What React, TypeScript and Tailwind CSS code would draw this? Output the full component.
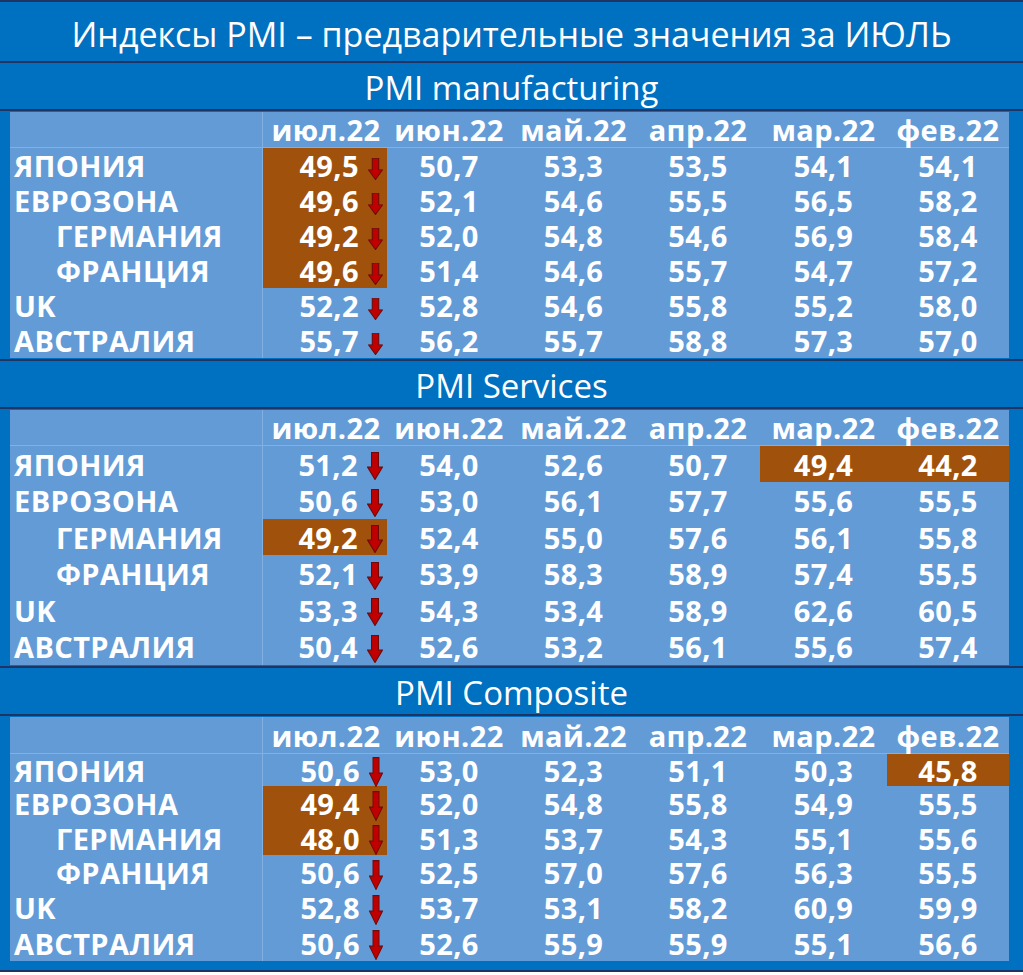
import React from 'react';

const months = ['июл.22', 'июн.22', 'май.22', 'апр.22', 'мар.22', 'фев.22'];

interface Row {
  label: string;
  indent?: boolean;
  values: string[];
  hl?: number[];
}

const manufacturing: Row[] = [
  { label: 'ЯПОНИЯ', values: ['49,5', '50,7', '53,3', '53,5', '54,1', '54,1'], hl: [0] },
  { label: 'ЕВРОЗОНА', values: ['49,6', '52,1', '54,6', '55,5', '56,5', '58,2'], hl: [0] },
  { label: 'ГЕРМАНИЯ', indent: true, values: ['49,2', '52,0', '54,8', '54,6', '56,9', '58,4'], hl: [0] },
  { label: 'ФРАНЦИЯ', indent: true, values: ['49,6', '51,4', '54,6', '55,7', '54,7', '57,2'], hl: [0] },
  { label: 'UK', values: ['52,2', '52,8', '54,6', '55,8', '55,2', '58,0'] },
  { label: 'АВСТРАЛИЯ', values: ['55,7', '56,2', '55,7', '58,8', '57,3', '57,0'] },
];

const services: Row[] = [
  { label: 'ЯПОНИЯ', values: ['51,2', '54,0', '52,6', '50,7', '49,4', '44,2'], hl: [4, 5] },
  { label: 'ЕВРОЗОНА', values: ['50,6', '53,0', '56,1', '57,7', '55,6', '55,5'] },
  { label: 'ГЕРМАНИЯ', indent: true, values: ['49,2', '52,4', '55,0', '57,6', '56,1', '55,8'], hl: [0] },
  { label: 'ФРАНЦИЯ', indent: true, values: ['52,1', '53,9', '58,3', '58,9', '57,4', '55,5'] },
  { label: 'UK', values: ['53,3', '54,3', '53,4', '58,9', '62,6', '60,5'] },
  { label: 'АВСТРАЛИЯ', values: ['50,4', '52,6', '53,2', '56,1', '55,6', '57,4'] },
];

const composite: Row[] = [
  { label: 'ЯПОНИЯ', values: ['50,6', '53,0', '52,3', '51,1', '50,3', '45,8'], hl: [5] },
  { label: 'ЕВРОЗОНА', values: ['49,4', '52,0', '54,8', '55,8', '54,9', '55,5'], hl: [0] },
  { label: 'ГЕРМАНИЯ', indent: true, values: ['48,0', '51,3', '53,7', '54,3', '55,1', '55,6'], hl: [0] },
  { label: 'ФРАНЦИЯ', indent: true, values: ['50,6', '52,5', '57,0', '57,6', '56,3', '55,5'] },
  { label: 'UK', values: ['52,8', '53,7', '53,1', '58,2', '60,9', '59,9'] },
  { label: 'АВСТРАЛИЯ', values: ['50,6', '52,6', '55,9', '55,9', '55,1', '56,6'] },
];

function Line() {
  return <div className="h-[2px] bg-[#1f3462]" />;
}

function DownArrow({ className }: { className: string }) {
  return (
    <svg viewBox="0 0 14 26" className={className} preserveAspectRatio="none">
      <polygon
        points="4,0.5 10,0.5 10,14 13.5,14 7,25.5 0.5,14 4,14"
        fill="#c00000"
        stroke="#6e0a0a"
        strokeWidth="1"
      />
    </svg>
  );
}

function Table({
  rows,
  header,
  heights,
  arrow,
}: {
  rows: Row[];
  header: string;
  heights: string[];
  arrow: string;
}) {
  return (
    <div className="ml-[10px] mr-[14px] bg-[#639bd7] grid grid-cols-[253px_124px_124px_125px_124px_127px_122px] font-bold text-white text-[29px] tracking-[0.4px] leading-none">
      <div className={`${header} border-r border-b border-[#82b0e2]`} />
      {months.map((m, i) => (
        <div key={m} className={`${header} flex items-center justify-center border-b border-[#82b0e2] ${i === 0 ? 'pl-[2px]' : ''}`}>
          {m}
        </div>
      ))}
      {rows.map((r, ri) => (
        <React.Fragment key={r.label}>
          <div
            className={`${heights[ri]} flex items-center border-r border-[#82b0e2] ${r.indent ? 'pl-[46px]' : 'pl-[4px]'}`}
          >
            {r.label}
          </div>
          {r.values.map((v, ci) => {
            const hl = r.hl?.includes(ci);
            return ci === 0 ? (
              <div
                key={ci}
                className={`${heights[ri]} flex items-center justify-end pr-[4px] ${hl ? 'bg-[#a0520c]' : ''}`}
              >
                <span className="mr-[9px]">{v}</span>
                <DownArrow className={arrow} />
              </div>
            ) : (
              <div
                key={ci}
                className={`${heights[ri]} flex items-center justify-center ${hl ? 'bg-[#a0520c]' : ''}`}
              >
                {v}
              </div>
            );
          })}
        </React.Fragment>
      ))}
    </div>
  );
}

function Band({ children }: { children: React.ReactNode }) {
  return (
    <div className="h-[46px] flex items-center justify-center text-white text-[33px] leading-none pt-[2px]">
      {children}
    </div>
  );
}

export default function App() {
  return (
    <div className="w-[1023px] h-[975px] bg-white font-['Open_Sans',sans-serif]">
      <div className="bg-[#0070c0]">
        <Line />
        <div className="h-[59px] flex items-center justify-center text-white text-[34px] leading-none pt-[4px]">
          Индексы PMI – предварительные значения за ИЮЛЬ
        </div>
        <Line />

        <Band>PMI manufacturing</Band>
        <Line />
        <div className="pt-px pb-px">
          <Table
            rows={manufacturing}
            header="h-[36px]"
            heights={['h-[35px]', 'h-[35px]', 'h-[35px]', 'h-[35px]', 'h-[35px]', 'h-[35px]']}
            arrow="w-[15px] h-[22px] translate-y-[3px] shrink-0"
          />
        </div>
        <Line />

        <Band>PMI Services</Band>
        <Line />
        <div className="pt-px pb-px">
          <Table
            rows={services}
            header="h-[36px]"
            heights={['h-[36px]', 'h-[37px]', 'h-[36px]', 'h-[37px]', 'h-[36px]', 'h-[37px]']}
            arrow="w-[16px] h-[28px] translate-y-[2px] shrink-0"
          />
        </div>
        <Line />

        <Band>PMI Composite</Band>
        <Line />
        <div className="pt-px pb-[9px]">
          <Table
            rows={composite}
            header="h-[37px]"
            heights={['h-[32px]', 'h-[35px]', 'h-[34px]', 'h-[35px]', 'h-[35px]', 'h-[36px]']}
            arrow="w-[14px] h-[30px] translate-y-[2px] shrink-0"
          />
        </div>
        <Line />
      </div>
    </div>
  );
}
